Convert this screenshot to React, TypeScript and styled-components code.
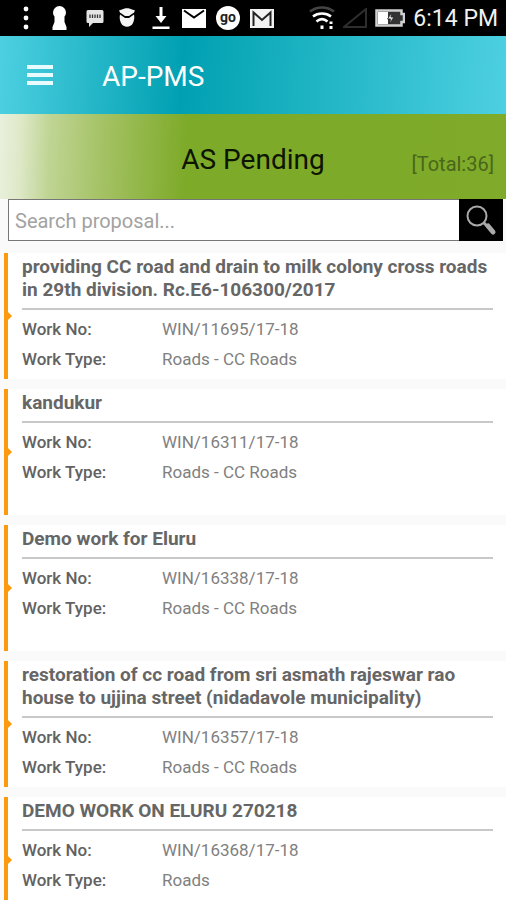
import React from "react";
import styled, { createGlobalStyle } from "styled-components";

const GlobalStyle = createGlobalStyle`
  *, *::before, *::after { box-sizing: border-box; }
  body {
    margin: 0;
    background: #fafafa;
    color: #666;
    font-family: Roboto, "Open Sans", sans-serif;
  }
`;

const Page = styled.div`
  display: flex;
  flex-direction: column;
  min-height: 100vh;
`;

const StatusBar = styled.div`
  display: flex;
  align-items: center;
  justify-content: space-between;
  height: 36px;
  padding: 0 8px 0 20px;
  background: #000;
  color: #fff;
`;

const Notifications = styled.div`
  display: flex;
  align-items: center;
  gap: 10px;
`;

const SystemIcons = styled.div`
  display: flex;
  align-items: center;
  gap: 8px;
`;

const Glyph = styled.svg`
  display: block;
  flex: none;
`;

const Clock = styled.time`
  padding-top: 2px;
  font-size: 23px;
  line-height: 34px;
  color: #f0f0f0;
  white-space: nowrap;
`;

const AppBar = styled.header`
  display: flex;
  align-items: center;
  gap: 44px;
  height: 78px;
  padding: 0 22px;
  background: linear-gradient(93deg, #4dd0e1 0%, #00a0b2 36%, #10abbb 50%, #4dd0e1 100%);
  color: #fff;
`;

const MenuButton = styled.button`
  display: flex;
  align-items: center;
  justify-content: center;
  width: 36px;
  height: 36px;
  padding: 0;
  border: 0;
  background: none;
  color: inherit;
  cursor: pointer;
`;

const AppTitle = styled.h1`
  margin: 0;
  padding-top: 4px;
  font-size: 28px;
  font-weight: 400;
  line-height: 36px;
`;

const Banner = styled.section`
  display: grid;
  grid-template-columns: 1fr auto 1fr;
  align-items: start;
  height: 85px;
  padding: 28px 12px 0;
  background: linear-gradient(
    92deg,
    #e9f0dd 0%,
    #dfe9c9 4%,
    #bfd493 10%,
    #a3c162 21%,
    #7daa28 37%,
    #7faa2a 100%
  );
`;

const BannerTitle = styled.h2`
  grid-column: 2;
  margin: 0;
  font-size: 28px;
  font-weight: 400;
  line-height: 36px;
  color: #0d1400;
`;

const Total = styled.span`
  justify-self: end;
  padding-top: 10px;
  font-size: 20px;
  line-height: 24px;
  color: #49661a;
`;

const SearchForm = styled.form`
  display: flex;
  height: 42px;
  margin: 0 3px 0 8px;
`;

const SearchInput = styled.input`
  flex: 1;
  min-width: 0;
  padding: 2px 6px 0;
  border: 1px solid #777;
  border-right: 0;
  border-radius: 0;
  outline: 0;
  background: #fff;
  color: #555;
  font: 400 20px/28px Roboto, sans-serif;

  &::placeholder {
    color: #a2a2a2;
    opacity: 1;
  }
`;

const SearchButton = styled.button`
  display: flex;
  align-items: center;
  justify-content: center;
  width: 44px;
  padding: 0;
  border: 0;
  background: #000;
  cursor: pointer;
`;

const CardList = styled.ul`
  display: flex;
  flex-direction: column;
  gap: 10px;
  margin: 0;
  padding: 12px 0 0 4px;
  list-style: none;
`;

const Card = styled.li`
  position: relative;
  min-height: 126px;
  padding: 2px 0 0 14px;
  border-left: 4px solid #fb9a0f;
  background: #fff;

  &::before {
    content: "";
    position: absolute;
    top: 50%;
    left: 0;
    margin-top: -4px;
    border: 4px solid transparent;
    border-left-color: #fb9a0f;
    border-right: 0;
  }
`;

const CardTitle = styled.h3`
  margin: 0;
  font-size: 19px;
  font-weight: 700;
  line-height: 23px;
  color: #666;
`;

const Details = styled.dl`
  display: grid;
  grid-template-columns: 140px 1fr;
  margin: 7px 13px 0 0;
  padding-top: 4px;
  border-top: 2px solid #c8c8c8;
  font-size: 17px;
  line-height: 30px;
`;

const Label = styled.dt`
  font-weight: 500;
  color: #626262;
`;

const Value = styled.dd`
  margin: 0;
  color: #808080;
`;

interface Work {
  title: string;
  no: string;
  type: string;
}

const works: Work[] = [
  {
    title: "providing CC road and drain to milk colony cross roads in 29th division. Rc.E6-106300/2017",
    no: "WIN/11695/17-18",
    type: "Roads - CC Roads",
  },
  { title: "kandukur", no: "WIN/16311/17-18", type: "Roads - CC Roads" },
  { title: "Demo work for Eluru", no: "WIN/16338/17-18", type: "Roads - CC Roads" },
  {
    title: "restoration of cc road from sri asmath rajeswar rao house to ujjina street (nidadavole municipality)",
    no: "WIN/16357/17-18",
    type: "Roads - CC Roads",
  },
  { title: "DEMO WORK ON ELURU 270218", no: "WIN/16368/17-18", type: "Roads" },
];

function NotificationIcons() {
  return (
    <Notifications aria-hidden="true">
      <Glyph width="12" height="24" viewBox="0 0 12 24" fill="#fff">
        <circle cx="6" cy="3" r="2.4" />
        <circle cx="6" cy="12" r="2.4" />
        <circle cx="6" cy="21" r="2.4" />
      </Glyph>
      <Glyph width="34" height="26" viewBox="0 0 34 26" fill="#fff">
        <path d="M17.500 1a6.500 6.500 0 0 1 6.500 6.500c0 1.500-.7 3-1.500 4V17l2 5v3h-14v-3l2-5v-5.500c-.8-1-1.500-2.500-1.500-4A6.500 6.500 0 0 1 17.500 1z" />
      </Glyph>
      <Glyph width="18" height="18" viewBox="0 0 18 18">
        <path d="M2 1h14a1.500 1.500 0 0 1 1.500 1.500v10A1.500 1.500 0 0 1 16 14H7l-4 4v-4H2A1.500 1.500 0 0 1 .5 12.500v-10A1.500 1.500 0 0 1 2 1z" fill="#e4e4e4" />
        <path d="M4 5.500v3.500M6.500 5.500v3.500M9 5.500v3.500M11.500 5.500v3.500M14 5.500v3.500" stroke="#333" strokeWidth="1.300" />
      </Glyph>
      <Glyph width="28" height="20" viewBox="0 0 28 20" fill="#f4f4f4">
        <path d="M5 2.500 10 .8c2-.6 4-.6 6 0l5 1.700-1 2-5 3.500h-4L6 4.500z" />
        <path d="M6 6.500 11 10h4l5-3.500c.7 3 .2 6-1 8.500-2.300 5-9.700 5-12 0-1.200-2.500-1.700-5.500-1-8.500z" />
      </Glyph>
      <Glyph width="20" height="24" viewBox="0 0 20 24" fill="#fff">
        <path d="M7.500 1h3v9h4L9 17l-5.500-7h4zM.5 20.500h17V23H.5z" />
      </Glyph>
      <Glyph width="24" height="19" viewBox="0 0 24 19">
        <path d="M0 0h24v19H0z" fill="#fff" />
        <path d="m2 1.500 10 7 10-7" fill="none" stroke="#000" strokeWidth="2" />
      </Glyph>
      <Glyph width="24" height="24" viewBox="0 0 24 24">
        <circle cx="12" cy="12" r="12" fill="#fff" />
        <text x="12" y="16" textAnchor="middle" fontFamily="Roboto, sans-serif" fontSize="14" fontWeight="700" fill="#222">go</text>
      </Glyph>
      <Glyph width="24" height="19" viewBox="0 0 24 19">
        <path d="M0 0h24v19H0z" fill="#f2f2f2" />
        <path d="M3.500 17V3.500L12 11l8.500-7.500V17" fill="none" stroke="#222" strokeWidth="2" />
      </Glyph>
    </Notifications>
  );
}

function DeviceIcons() {
  return (
    <SystemIcons>
      <Glyph width="26" height="24" viewBox="0 0 26 24" fill="none" strokeWidth="2.500" aria-hidden="true">
        <path d="M1 5.500C8 0 18 0 25 5.500" stroke="#444" />
        <path d="M4 10.500c5-4 13-4 18 0" stroke="#fff" />
        <path d="M7.500 15.500c3.500-3 7.500-3 11 0" stroke="#fff" />
        <path d="M13 19.500v3.500M22 20v3M22 15.500v2.500" stroke="#fff" strokeWidth="3" />
      </Glyph>
      <Glyph width="24" height="20" viewBox="0 0 24 20" fill="none" aria-hidden="true">
        <path d="M23 1v18H1z" stroke="#2e2e2e" strokeWidth="2" />
      </Glyph>
      <Glyph width="30" height="18" viewBox="0 0 30 18" aria-hidden="true">
        <path d="M1.500 1.500h25V5H29v8h-2.500v3.500h-25z" fill="#333" stroke="#d0d0d0" strokeWidth="2.500" />
        <path d="M3 3h10v12H3z" fill="#fff" />
        <path d="m17 3-4.500 7h3l-1 5 4.500-7h-3z" fill="#e4e4e4" stroke="#222" strokeWidth=".8" />
      </Glyph>
      <Clock dateTime="18:14">6:14 PM</Clock>
    </SystemIcons>
  );
}

function WorkCard({ work }: { work: Work }) {
  return (
    <Card>
      <CardTitle>{work.title}</CardTitle>
      <Details>
        <Label>Work No:</Label>
        <Value>{work.no}</Value>
        <Label>Work Type:</Label>
        <Value>{work.type}</Value>
      </Details>
    </Card>
  );
}

export default function App() {
  return (
    <>
      <GlobalStyle />
      <Page>
        <StatusBar>
          <NotificationIcons />
          <DeviceIcons />
        </StatusBar>
        <AppBar>
          <MenuButton type="button" aria-label="Open menu">
            <Glyph width="28" height="20" viewBox="0 0 28 20" fill="#e8fcff">
              <path d="M1 0h26v4H1zM1 8h26v4H1zM1 16h26v4H1z" />
            </Glyph>
          </MenuButton>
          <AppTitle>AP-PMS</AppTitle>
        </AppBar>
        <main>
          <Banner>
            <BannerTitle>AS Pending</BannerTitle>
            <Total>[Total:36]</Total>
          </Banner>
          <SearchForm role="search" onSubmit={(e: React.FormEvent) => e.preventDefault()}>
            <SearchInput type="text" aria-label="Search proposal" placeholder="Search proposal..." />
            <SearchButton type="submit" aria-label="Search">
              <Glyph width="32" height="32" viewBox="0 0 32 32" fill="none">
                <circle cx="12" cy="12" r="9.500" stroke="#aaa" strokeWidth="2" />
                <path d="m18.500 18.500 4 4" stroke="#aaa" strokeWidth="3" />
                <path d="m23 22 5 6" stroke="#aaa" strokeWidth="5" strokeLinecap="round" />
              </Glyph>
            </SearchButton>
          </SearchForm>
          <CardList>
            {works.map((work) => (
              <WorkCard key={work.no} work={work} />
            ))}
          </CardList>
        </main>
      </Page>
    </>
  );
}
